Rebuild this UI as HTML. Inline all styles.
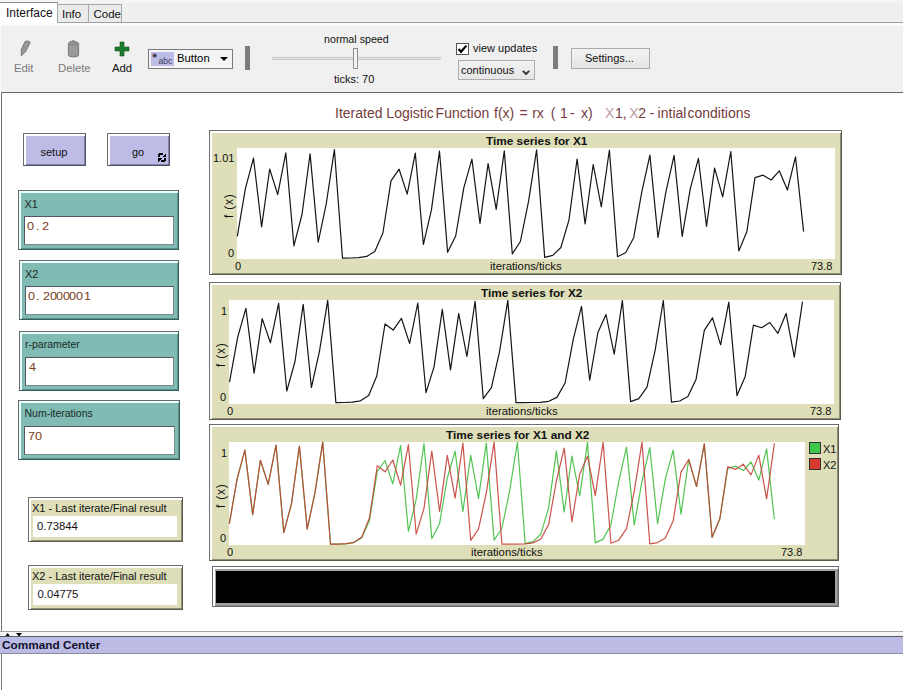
<!DOCTYPE html>
<html><head><meta charset="utf-8">
<style>
html,body{margin:0;padding:0;width:903px;height:690px;overflow:hidden;background:#fff;font-family:"Liberation Sans",sans-serif;}
.a{position:absolute;box-sizing:border-box;}
.t{position:absolute;white-space:nowrap;line-height:1;}
.plot{position:absolute;box-sizing:border-box;background:#dedeb8;border-top:1px solid #6e6e6e;border-left:1px solid #6e6e6e;border-bottom:1px solid #5c5c4a;border-right:1px solid #5c5c4a;box-shadow:inset 2px 2px 0 #fff,inset -1px -1px 0 #8e8e76;}
.btn{position:absolute;box-sizing:border-box;background:#bcbce6;border-top:1px solid #707070;border-left:1px solid #707070;border-bottom:1px solid #50506a;border-right:1px solid #50506a;box-shadow:inset 2px 2px 0 #fff,inset -1px -1px 0 #8484a8;}
.inp{position:absolute;box-sizing:border-box;background:#80bcb3;border-top:1px solid #6a6a6a;border-left:1px solid #6a6a6a;border-bottom:1px solid #35605a;border-right:1px solid #35605a;box-shadow:inset 2px 2px 0 #e8fffc,inset -1px -1px 0 #5a8e86;}
.fld{position:absolute;box-sizing:border-box;background:#fff;border:1px solid #7a8a88;border-top-color:#556;border-left-color:#556;}
.mon{position:absolute;box-sizing:border-box;background:#dedeb8;border-top:1px solid #707070;border-left:1px solid #707070;border-bottom:1px solid #5c5c4a;border-right:1px solid #5c5c4a;box-shadow:inset 2px 2px 0 #fff,inset -1px -1px 0 #8e8e76;}
</style></head><body>
<!-- tab strip -->
<div class="a" style="left:0;top:0;width:903px;height:22px;background:#efefef;"></div>
<div class="a" style="left:0;top:0;width:903px;height:3px;background:#f5f5f5;"></div>
<div class="a" style="left:0;top:22px;width:903px;height:1px;background:#a0a0a0;"></div>
<div class="a" style="left:0;top:23px;width:903px;height:3px;background:#fbfbfb;"></div>
<div class="a" style="left:0;top:2px;width:58px;height:21px;background:#fff;border-top:1px solid #8c8c8c;border-right:1px solid #a0a0a0;"></div>
<div class="a" style="left:57px;top:4px;width:32px;height:19px;background:#ebebeb;border:1px solid #a8a8a8;border-bottom:none;"></div>
<div class="a" style="left:88px;top:4px;width:34px;height:19px;background:#ebebeb;border:1px solid #a8a8a8;border-bottom:none;"></div>
<div class="a" style="left:57px;top:22px;width:846px;height:1px;background:#a0a0a0;"></div>
<div class="t" style="left:6px;top:7px;font-size:12px;color:#111;">Interface</div>
<div class="t" style="left:62px;top:9px;font-size:11.5px;color:#111;">Info</div>
<div class="t" style="left:93.5px;top:9px;font-size:11.5px;color:#111;">Code</div>

<!-- toolbar -->
<div class="a" style="left:0;top:26px;width:903px;height:66px;background:#f0f0f0;border-left:1px solid #fafafa;"></div>
<div class="a" style="left:1px;top:92px;width:902px;height:1px;background:#666;"></div>
<!-- edit pencil -->
<svg class="a" style="left:0;top:30px" width="140" height="30" viewBox="0 30 140 30">
<path d="M25.3 41.2 H29 L30.2 42.6 L25.6 51.6 L21.4 55.8 L21.3 49.4 Z" fill="#979797" stroke="#6e6e6e" stroke-width="0.9" stroke-linejoin="round"/>
<path d="M68.4 43.5 Q68.6 42 71 41.6 Q71.2 40.8 73 40.8 Q74.8 40.8 75 41.6 Q78.4 42 78.6 43.5 L78.6 54.8 Q78.4 56.6 76 56.8 L71 56.8 Q68.6 56.6 68.4 54.8 Z" fill="#959595" stroke="#727272" stroke-width="0.9"/>
<path d="M70.5 45 V55 M73.5 45 V55.5 M76.5 45 V55" stroke="#a8a8a8" stroke-width="0.8"/>
<path d="M69 44.2 Q73.5 45.6 78 44.2" stroke="#7a7a7a" stroke-width="0.8" fill="none"/>
<path d="M120 42 H124 V47 H129 V51 H124 V56 H120 V51 H115 V47 H120 Z" fill="#1c7a2c" stroke="#115520" stroke-width="0.6"/>
</svg>
<div class="t" style="left:14px;top:63px;font-size:11.3px;color:#7a7a7a;">Edit</div>
<div class="t" style="left:58px;top:63px;font-size:11.3px;color:#7a7a7a;">Delete</div>
<div class="t" style="left:112px;top:63px;font-size:11.3px;color:#111;">Add</div>
<!-- chooser -->
<div class="a" style="left:148px;top:49px;width:85px;height:20px;background:#f4f4f4;border:1px solid #7a7a7a;"></div>
<div class="a" style="left:151px;top:52px;width:23px;height:14px;background:#bcbce6;"></div>
<div class="t" style="left:152px;top:52px;font-size:6px;color:#333;">&#9673;</div>
<div class="t" style="left:158.5px;top:56.5px;font-size:8.6px;color:#3a3a60;">abc</div>
<div class="t" style="left:177px;top:53px;font-size:11.3px;color:#000;">Button</div>
<svg class="a" style="left:220px;top:57px" width="8" height="4" viewBox="0 0 8 4"><path d="M0 0 H8 L4 4 Z" fill="#000"/></svg>
<div class="a" style="left:245px;top:46px;width:5px;height:24px;background:#7c7c7c;"></div>
<!-- speed slider -->
<div class="t" style="left:324px;top:34px;font-size:10.7px;color:#111;">normal speed</div>
<div class="a" style="left:272px;top:57px;width:169px;height:3px;background:#e8e8e8;border-top:1px solid #c6c6c6;border-bottom:1px solid #c6c6c6;"></div>
<div class="a" style="left:353px;top:48px;width:5px;height:21px;background:#f2f2f2;border:1px solid #8e8e8e;"></div>
<div class="t" style="left:334px;top:74px;font-size:11px;color:#111;">ticks: 70</div>
<!-- view updates -->
<div class="a" style="left:456px;top:43px;width:13px;height:12px;background:#fff;border:1px solid #555;"></div>
<svg class="a" style="left:457px;top:44px" width="11" height="10" viewBox="0 0 11 10"><path d="M1.6 5 L4 7.8 L9.4 1.6" stroke="#000" stroke-width="2.2" fill="none"/></svg>
<div class="t" style="left:473px;top:43px;font-size:11px;color:#111;">view updates</div>
<div class="a" style="left:458px;top:60px;width:77px;height:20px;background:linear-gradient(#f2f2f2,#e6e6e6);border:1px solid #adadad;"></div>
<div class="t" style="left:461px;top:65px;font-size:11px;color:#111;">continuous</div>
<svg class="a" style="left:522px;top:70px" width="8" height="5" viewBox="0 0 8 5"><path d="M0.8 0.8 L4 4 L7.2 0.8" stroke="#333" stroke-width="1.9" fill="none"/></svg>
<div class="a" style="left:553px;top:46px;width:5px;height:23px;background:#7c7c7c;"></div>
<div class="a" style="left:571px;top:48px;width:79px;height:21px;background:linear-gradient(#f3f3f3,#e4e4e4);border:1px solid #acacac;"></div>
<div class="t" style="left:585px;top:53px;font-size:11px;color:#111;">Settings...</div>

<!-- interface area -->
<div class="a" style="left:1px;top:92px;width:1px;height:540px;background:#707070;"></div>
<div class="a" style="left:0;top:0;width:903px;height:0;font-size:14px;color:#743c3c;">
<div class="t" style="left:335px;top:106px;">Iterated Logistic</div>
<div class="t" style="left:435.6px;top:106px;">Function</div>
<div class="t" style="left:494px;top:106px;">f(x)</div>
<div class="t" style="left:519.5px;top:106px;">=</div>
<div class="t" style="left:532.2px;top:106px;">rx</div>
<div class="t" style="left:550.8px;top:106px;">(</div>
<div class="t" style="left:560px;top:106px;">1</div>
<div class="t" style="left:570px;top:106px;">-</div>
<div class="t" style="left:581px;top:106px;">x)</div>
<div class="t" style="left:605.1px;top:106px;color:#bb9c9c;">X</div>
<div class="t" style="left:615px;top:106px;">1,</div>
<div class="t" style="left:629.2px;top:106px;color:#bb9c9c;">X</div>
<div class="t" style="left:638.3px;top:106px;">2</div>
<div class="t" style="left:649.6px;top:106px;">-</div>
<div class="t" style="left:657.6px;top:106px;">intial</div>
<div class="t" style="left:687.5px;top:106px;">conditions</div>
</div>

<!-- buttons -->
<div class="btn" style="left:23px;top:133px;width:63px;height:33px;"></div>
<div class="t" style="left:40.5px;top:147px;font-size:11px;color:#111;">setup</div>
<div class="btn" style="left:107px;top:133px;width:63px;height:33px;"></div>
<div class="t" style="left:132px;top:147px;font-size:11px;color:#111;">go</div>
<svg class="a" style="left:158px;top:153px" width="8" height="9" viewBox="0 0 8 9" shape-rendering="crispEdges"><path d="M1 0H5V2H2V4H0V1H1Z M8 0V4H4Z M7 9H3V7H6V5H8V8H7Z M0 9V5H4Z" fill="#000"/></svg>

<!-- inputs -->
<div class="inp" style="left:18px;top:190px;width:161px;height:60px;"></div>
<div class="fld" style="left:24px;top:216px;width:150px;height:29px;"></div>
<div class="t" style="left:24.5px;top:199px;font-size:11px;color:#1a2a28;">X1</div>
<div class="t" style="left:27.3px;top:221px;font-size:11px;color:#7a3e22;transform-origin:0 0;transform:scaleX(1.15);">0</div>
<div class="t" style="left:35.8px;top:221px;font-size:11px;color:#7a3e22;transform-origin:0 0;transform:scaleX(1.15);">.</div>
<div class="t" style="left:42.4px;top:221px;font-size:11px;color:#7a3e22;transform-origin:0 0;transform:scaleX(1.15);">2</div>

<div class="inp" style="left:19px;top:260px;width:160px;height:60px;"></div>
<div class="fld" style="left:25px;top:286px;width:149px;height:29px;"></div>
<div class="t" style="left:25px;top:269px;font-size:11px;color:#1a2a28;">X2</div>
<div class="t" style="left:28.4px;top:291px;font-size:11px;color:#7a3e22;transform-origin:0 0;transform:scaleX(1.15);">0</div>
<div class="t" style="left:36.4px;top:291px;font-size:11px;color:#7a3e22;transform-origin:0 0;transform:scaleX(1.15);">.</div>
<div class="t" style="left:43.2px;top:291px;font-size:11px;color:#7a3e22;transform-origin:0 0;transform:scaleX(1.15);">2</div>
<div class="t" style="left:49.5px;top:291px;font-size:11px;color:#7a3e22;transform-origin:0 0;transform:scaleX(1.15);">0</div>
<div class="t" style="left:56.1px;top:291px;font-size:11px;color:#7a3e22;transform-origin:0 0;transform:scaleX(1.15);">0</div>
<div class="t" style="left:62.8px;top:291px;font-size:11px;color:#7a3e22;transform-origin:0 0;transform:scaleX(1.15);">0</div>
<div class="t" style="left:69.4px;top:291px;font-size:11px;color:#7a3e22;transform-origin:0 0;transform:scaleX(1.15);">0</div>
<div class="t" style="left:75.7px;top:291px;font-size:11px;color:#7a3e22;transform-origin:0 0;transform:scaleX(1.15);">0</div>
<div class="t" style="left:83.8px;top:291px;font-size:11px;color:#7a3e22;transform-origin:0 0;transform:scaleX(1.15);">1</div>

<div class="inp" style="left:19px;top:331px;width:160px;height:60px;"></div>
<div class="fld" style="left:25px;top:357px;width:149px;height:29px;"></div>
<div class="t" style="left:25px;top:339px;font-size:10.5px;color:#1a2a28;">r-parameter</div>
<div class="t" style="left:29px;top:362px;font-size:11px;color:#7a3e22;transform-origin:0 0;transform:scaleX(1.15);">4</div>

<div class="inp" style="left:18px;top:400px;width:162px;height:60px;"></div>
<div class="fld" style="left:24px;top:426px;width:151px;height:29px;"></div>
<div class="t" style="left:24.5px;top:408px;font-size:10.5px;color:#1a2a28;">Num-iterations</div>
<div class="t" style="left:28.3px;top:431px;font-size:11px;color:#7a3e22;transform-origin:0 0;transform:scaleX(1.15);">7</div>
<div class="t" style="left:34.6px;top:431px;font-size:11px;color:#7a3e22;transform-origin:0 0;transform:scaleX(1.15);">0</div>

<!-- monitors -->
<div class="mon" style="left:28px;top:497px;width:155px;height:45px;"></div>
<div class="a" style="left:33px;top:516px;width:144px;height:21px;background:#fff;"></div>
<div class="t" style="left:32px;top:503px;font-size:11px;color:#111;">X1 - Last iterate/Final result</div>
<div class="t" style="left:37px;top:521px;font-size:11.3px;color:#111;">0.73844</div>

<div class="mon" style="left:28px;top:565px;width:155px;height:45px;"></div>
<div class="a" style="left:33px;top:584px;width:144px;height:21px;background:#fff;"></div>
<div class="t" style="left:32px;top:571px;font-size:11px;color:#111;">X2 - Last iterate/Final result</div>
<div class="t" style="left:37.5px;top:589px;font-size:11.3px;color:#111;">0.04775</div>

<!-- plot 1 -->
<div class="plot" style="left:209px;top:130px;width:633px;height:145px;"></div>
<div class="a" style="left:237px;top:148px;width:598px;height:111px;background:#fff;"></div>
<div class="t" style="left:486px;top:136px;font-size:11.8px;font-weight:bold;color:#111;">Time series for X1</div>
<div class="t" style="left:213px;top:153px;font-size:11px;color:#111;">1.01</div>
<div class="t" style="left:228px;top:248px;font-size:11px;color:#111;">0</div>
<div class="t" style="left:235px;top:261px;font-size:11px;color:#111;">0</div>
<div class="t" style="left:490px;top:261px;font-size:11.3px;color:#111;">iterations/ticks</div>
<div class="t" style="left:811px;top:261px;font-size:11px;color:#111;">73.8</div>
<div class="t" style="left:222.5px;top:218px;font-size:12px;letter-spacing:0.8px;color:#111;transform-origin:0 0;transform:rotate(-90deg);">f (x)</div>

<!-- plot 2 -->
<div class="plot" style="left:209px;top:282px;width:632px;height:138px;"></div>
<div class="a" style="left:229px;top:300px;width:605px;height:104px;background:#fff;"></div>
<div class="t" style="left:481px;top:288px;font-size:11.8px;font-weight:bold;color:#111;">Time series for X2</div>
<div class="t" style="left:221px;top:306px;font-size:11px;color:#111;">1</div>
<div class="t" style="left:220px;top:392px;font-size:11px;color:#111;">0</div>
<div class="t" style="left:227px;top:406px;font-size:11px;color:#111;">0</div>
<div class="t" style="left:486px;top:406px;font-size:11.3px;color:#111;">iterations/ticks</div>
<div class="t" style="left:810px;top:406px;font-size:11px;color:#111;">73.8</div>
<div class="t" style="left:215px;top:366.5px;font-size:12px;letter-spacing:0.8px;color:#111;transform-origin:0 0;transform:rotate(-90deg);">f (x)</div>

<!-- plot 3 -->
<div class="plot" style="left:209px;top:424px;width:630px;height:137px;"></div>
<div class="a" style="left:229px;top:442px;width:576px;height:103px;background:#fff;"></div>
<div class="t" style="left:446px;top:430px;font-size:11.8px;font-weight:bold;color:#111;">Time series for X1 and X2</div>
<div class="t" style="left:221px;top:448px;font-size:11px;color:#111;">1</div>
<div class="t" style="left:220px;top:533px;font-size:11px;color:#111;">0</div>
<div class="t" style="left:227px;top:547px;font-size:11px;color:#111;">0</div>
<div class="t" style="left:471px;top:547px;font-size:11.3px;color:#111;">iterations/ticks</div>
<div class="t" style="left:781px;top:547px;font-size:11px;color:#111;">73.8</div>
<div class="t" style="left:215px;top:508px;font-size:12px;letter-spacing:0.8px;color:#111;transform-origin:0 0;transform:rotate(-90deg);">f (x)</div>
<div class="a" style="left:809px;top:442px;width:12px;height:12px;background:#3ec84a;border:1px solid #333;"></div>
<div class="a" style="left:809px;top:458px;width:12px;height:12px;background:#d83a2e;border:1px solid #333;"></div>
<div class="t" style="left:823px;top:444px;font-size:11px;color:#111;">X1</div>
<div class="t" style="left:823px;top:460px;font-size:11px;color:#111;">X2</div>

<svg class="a" style="left:0;top:0;pointer-events:none" width="903" height="690">
<g fill="none" stroke-width="1.2" stroke-linejoin="round">
<polyline points="237.3,236.4 245.4,188.7 253.5,158.2 261.6,226.8 269.7,169.0 277.7,194.6 285.8,152.8 293.9,245.8 302.0,214.5 310.1,153.9 318.2,242.1 326.3,203.5 334.4,149.7 342.5,258.1 350.6,258.0 358.6,257.7 366.7,256.4 374.8,251.4 382.9,233.0 391.0,180.9 399.1,169.2 407.2,194.1 415.3,153.2 423.4,244.4 431.4,210.2 439.5,151.2 447.6,252.3 455.7,236.0 463.8,187.8 471.9,159.2 480.0,223.4 488.1,163.7 496.2,209.3 504.3,150.8 512.3,253.8 520.4,241.5 528.5,201.7 536.6,149.9 544.7,257.4 552.8,255.4 560.9,247.5 569.0,219.8 577.1,159.0 585.1,223.9 593.2,164.5 601.3,206.9 609.4,150.0 617.5,256.7 625.6,252.7 633.7,237.7 641.8,191.8 649.9,155.1 658.0,237.5 666.0,191.4 674.1,155.4 682.2,236.4 690.3,188.6 698.4,158.3 706.5,226.3 714.6,168.1 722.7,196.9 730.8,151.5 738.8,250.9 746.9,231.4 755.0,177.6 763.1,175.2 771.2,180.0 779.3,170.8 787.4,190.0 795.5,156.8 803.6,231.6" stroke="#151515"/>
<polyline points="229.5,382.2 237.7,337.2 245.9,308.4 254.1,373.1 262.2,318.6 270.4,342.8 278.6,303.4 286.8,391.0 295.0,361.5 303.2,304.3 311.4,387.5 319.5,351.1 327.7,300.4 335.9,402.6 344.1,402.5 352.3,402.1 360.5,400.8 368.7,395.5 376.8,376.0 385.0,324.0 393.2,330.1 401.4,318.3 409.6,343.4 417.8,303.0 426.0,392.6 434.1,366.6 442.3,309.4 450.5,369.9 458.7,313.6 466.9,356.5 475.1,301.4 483.3,398.7 491.4,387.6 499.6,351.3 507.8,300.4 516.0,402.6 524.2,402.6 532.4,402.5 540.6,402.3 548.7,401.3 556.9,397.4 565.1,383.0 573.3,339.2 581.5,306.4 589.7,380.2 597.9,332.5 606.0,314.5 614.2,354.1 622.4,300.7 630.6,401.6 638.8,398.6 647.0,387.1 655.2,349.9 663.3,300.5 671.5,402.2 679.7,401.0 687.9,396.4 696.1,379.2 704.3,330.4 712.5,317.8 720.6,344.8 728.8,302.2 737.0,395.6 745.2,376.6 753.4,325.1 761.6,327.7 769.8,322.5 777.9,333.3 786.1,313.4 794.3,357.1 802.5,301.6" stroke="#151515"/>
<polyline points="229.3,523.8 237.1,478.9 244.9,450.1 252.7,514.7 260.4,460.3 268.2,484.4 276.0,445.1 283.8,532.6 291.6,503.2 299.4,446.0 307.2,529.1 315.0,492.7 322.7,442.1 330.5,544.2 338.3,544.1 346.1,543.8 353.9,542.6 361.7,537.9 369.5,520.5 377.3,471.5 385.0,460.5 392.8,483.9 400.6,445.4 408.4,531.3 416.2,499.1 424.0,443.5 431.8,538.7 439.6,523.4 447.3,478.0 455.1,451.1 462.9,511.5 470.7,455.3 478.5,498.3 486.3,443.1 494.1,540.1 501.9,528.5 509.6,491.1 517.4,442.3 525.2,543.6 533.0,541.6 540.8,534.2 548.6,508.1 556.4,450.9 564.2,512.0 571.9,456.1 579.7,496.0 587.5,442.4 595.3,542.9 603.1,539.1 610.9,525.0 618.7,481.7 626.5,447.2 634.2,524.8 642.0,481.4 649.8,447.5 657.6,523.7 665.4,478.7 673.2,450.2 681.0,514.2 688.7,459.5 696.5,486.5 704.3,443.8 712.1,537.5 719.9,519.0 727.7,468.4 735.5,466.2 743.3,470.6 751.0,462.0 758.8,480.1 766.6,448.8 774.4,519.3" stroke="#52c452"/>
<polyline points="229.3,523.8 237.1,478.9 244.9,450.1 252.7,514.7 260.4,460.3 268.2,484.4 276.0,445.1 283.8,532.6 291.6,503.2 299.4,446.0 307.2,529.1 315.0,492.7 322.7,442.1 330.5,544.2 338.3,544.1 346.1,543.7 353.9,542.4 361.7,537.1 369.5,517.7 377.3,465.6 385.0,471.8 392.8,460.0 400.6,485.1 408.4,444.7 416.2,534.2 424.0,508.3 431.8,451.1 439.6,511.5 447.3,455.3 455.1,498.2 462.9,443.1 470.7,540.3 478.5,529.2 486.3,493.0 494.1,442.1 501.9,544.2 509.6,544.2 517.4,544.1 525.2,543.9 533.0,542.9 540.8,539.0 548.6,524.6 556.4,480.8 564.2,448.1 571.9,521.8 579.7,474.2 587.5,456.2 595.3,495.7 603.1,442.4 610.9,543.2 618.7,540.2 626.5,528.7 634.2,491.6 642.0,442.2 649.8,543.8 657.6,542.6 665.4,538.0 673.2,520.8 681.0,472.1 688.7,459.5 696.5,486.4 704.3,443.9 712.1,537.2 719.9,518.2 727.7,466.8 735.5,469.4 743.3,464.2 751.0,474.9 758.8,455.1 766.6,498.8 774.4,443.3" stroke="#c44038" stroke-opacity="0.9"/>
</g>
</svg>

<!-- view -->
<div class="a" style="left:212px;top:566px;width:627px;height:41px;background:#a2a2a2;border:1px solid #6a6a6a;box-shadow:inset 2px 2px 0 #fff,inset -1px -1px 0 #888;"></div>
<div class="a" style="left:216px;top:571px;width:619px;height:32px;background:#000;"></div>

<!-- bottom -->
<div class="a" style="left:0;top:631px;width:903px;height:1px;background:#a4a4ae;"></div>
<div class="a" style="left:0;top:632px;width:903px;height:5px;background:#f4f4f4;"></div>
<svg class="a" style="left:0;top:632px" width="26" height="5" viewBox="0 0 26 5"><path d="M5 4.5 L7.6 1 L10.2 4.5 Z M16 1 L22 1 L19 4.5 Z" fill="#000"/></svg>
<div class="a" style="left:0;top:636px;width:903px;height:18px;background:#bbbbe5;border-top:1px solid #5c5c64;border-bottom:1px solid #8c8c9c;"></div>
<div class="t" style="left:2px;top:640px;font-size:11.8px;font-weight:bold;color:#10102a;">Command Center</div>
<div class="a" style="left:1px;top:654px;width:1px;height:36px;background:#7a7a7a;"></div>
</body></html>
